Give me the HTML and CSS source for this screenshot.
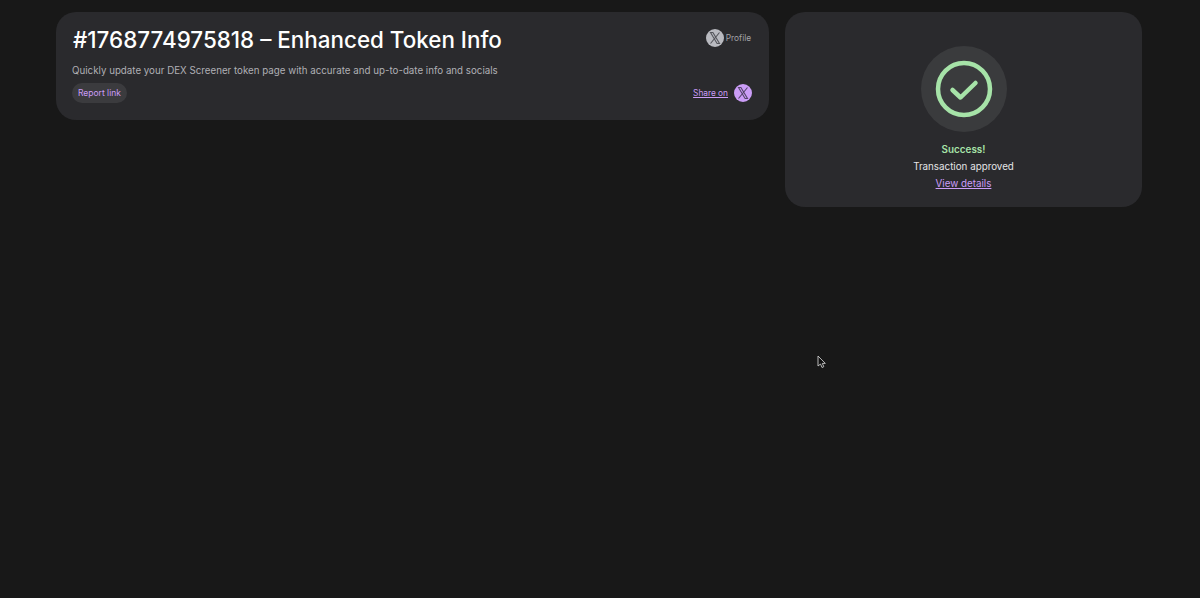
FILE: index.html
```html
<!DOCTYPE html>
<html lang="en">
<head>
    <meta charset="UTF-8">
    <title>Enhanced Token Info</title>
    <link rel="stylesheet" href="styles.css">
</head>
<body>
<div class="layout">
    <section class="card order-card">
        <div class="order-top">
            <h1>#1768774975818 – Enhanced Token Info</h1>
            <a class="profile-link">
                <svg class="x-icon x-grey" viewBox="0 0 18 18"><circle cx="9" cy="9" r="9"/><path class="x-mark" d="M4.500 3.500l6.600 11h2.400L6.900 3.500zM13.500 3.500L4.500 14.500"/></svg>
                Profile
            </a>
        </div>
        <p class="order-desc">Quickly update your DEX Screener token page with accurate and up-to-date info and socials</p>
        <div class="order-bottom">
            <a class="report-link">Report link</a>
            <div class="share">
                <a class="share-link">Share on</a>
                <svg class="x-icon x-purple" viewBox="0 0 18 18"><circle cx="9" cy="9" r="9"/><path class="x-mark" d="M4.500 3.500l6.600 11h2.400L6.900 3.500zM13.500 3.500L4.500 14.500"/></svg>
            </div>
        </div>
    </section>
    <section class="card status-card">
        <div class="status-badge">
            <svg viewBox="0 0 58 58" width="58" height="58"><circle cx="29" cy="29" r="26" fill="none" stroke="#a6e3a8" stroke-width="4.500"/><path d="M17.500 30l8 7.500 15-14.500" fill="none" stroke="#a6e3a8" stroke-width="4.500" stroke-linecap="round" stroke-linejoin="round"/></svg>
        </div>
        <div class="status-title">Success!</div>
        <div class="status-text">Transaction approved</div>
        <a class="status-link">View details</a>
    </section>
</div>
<svg class="cursor" viewBox="0 0 10 14" width="10" height="14"><path d="M1 1v10l2.500-2 1.500 3.500 1.800-.8-1.500-3.300h3z" fill="#111" stroke="#ccc" stroke-width="0.900"/></svg>
</body>
</html>
```

FILE: styles.css
```css
html, body { height: 100%; }
body { margin: 0; background: #181818; color: #fff; font-family: Inter, "Noto Sans", sans-serif; overflow: hidden; }
.layout { display: flex; align-items: flex-start; gap: 16px; padding: 12px 58px 0 56px; }
.card { background: #2a2a2d; border-radius: 20px; box-sizing: border-box; }
.order-card { width: 713px; height: 108px; padding: 12px 17px 0 16px; }
.order-top { display: flex; justify-content: space-between; align-items: flex-start; }
h1 { margin: 0 0 0 1px; font-size: 22.400px; line-height: 32px; font-weight: 500; }
.profile-link { display: flex; align-items: center; gap: 2px; margin: 5px 1px 0 0; font-size: 8.300px; color: #a3a3a8; }
.x-icon { width: 18px; height: 18px; display: block; }
.x-mark { fill: none; stroke-width: 1.100; }
.x-grey { fill: #b9bac0; }
.x-grey .x-mark { stroke: #55565c; }
.x-purple { fill: #cb9df7; }
.x-purple .x-mark { stroke: #54456a; }
.order-desc { margin: 7px 0 0; font-size: 9.750px; line-height: 16px; color: #b0b0b5; }
.order-bottom { display: flex; justify-content: space-between; align-items: center; margin-top: 4px; }
.report-link { background: #3b3b3e; color: #cb9df7; font-size: 8.500px; line-height: 20px; padding: 0 6px; border-radius: 10px; }
.share { display: flex; align-items: center; gap: 6px; }
.share-link { color: #cb9df7; font-size: 8.300px; text-decoration: underline; }
.status-card { width: 357px; height: 195px; padding-top: 34px; display: flex; flex-direction: column; align-items: center; }
.status-badge { width: 86px; height: 86px; border-radius: 50%; background: #3a3b3d; display: flex; align-items: center; justify-content: center; margin-bottom: 9px; }
.status-title { color: #a6e3a8; font-size: 9.900px; font-weight: 600; line-height: 17px; }
.status-text { color: #e4e4e6; font-size: 9.800px; line-height: 17px; }
.status-link { color: #cb9df7; font-size: 9.800px; line-height: 17px; text-decoration: underline; }
.cursor { position: absolute; left: 817px; top: 355px; }
```
